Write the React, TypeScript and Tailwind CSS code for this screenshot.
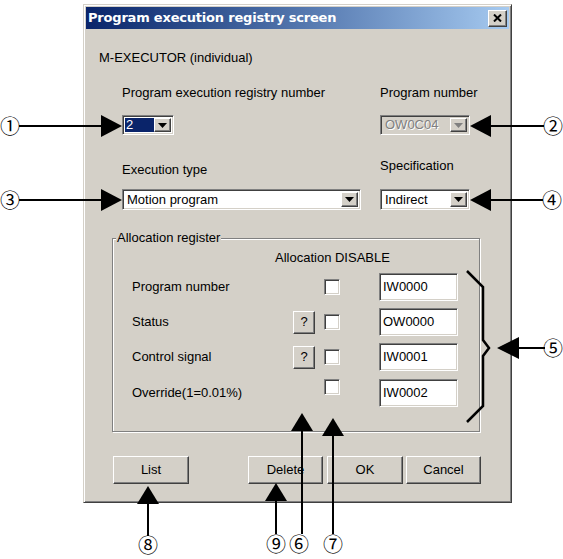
import React from 'react';

const raised =
  'border border-t-white border-l-white border-r-[#404040] border-b-[#404040] shadow-[inset_-1px_-1px_0_#808080,inset_1px_1px_0_#d4d0c8]';
const sunken =
  'border border-t-[#808080] border-l-[#808080] border-r-white border-b-white shadow-[inset_1px_1px_0_#404040,inset_-1px_-1px_0_#d4d0c8]';

const DropButton = ({ disabled }: { disabled?: boolean }) => (
  <div className={`w-[17px] h-full bg-[#d4d0c8] flex items-center justify-center ${raised}`}>
    <svg width="9" height="5" viewBox="0 0 9 5">
      <path d="M0 0h9L4.5 5z" fill={disabled ? '#808080' : '#000'} />
    </svg>
  </div>
);

interface ComboProps {
  className: string;
  children: React.ReactNode;
  disabled?: boolean;
}

const Combo = ({ className, children, disabled }: ComboProps) => (
  <div className={`flex p-[2px] ${sunken} ${disabled ? 'bg-[#d4d0c8]' : 'bg-white'} ${className}`}>
    <div className="flex-1 flex items-center min-w-0">{children}</div>
    <DropButton disabled={disabled} />
  </div>
);

const Button = ({ label, className }: { label: string; className: string }) => (
  <div className={`h-[28px] flex items-center justify-center bg-[#d4d0c8] ${raised} ${className}`}>
    {label}
  </div>
);

const CheckBox = ({ className = '' }: { className?: string }) => (
  <div className={`w-[16px] h-[16px] bg-white ${sunken} ${className}`} />
);

const RegRow = ({ label, help, reg, last }: { label: string; help?: boolean; reg: string; last?: boolean }) => (
  <div className={`flex items-center h-[28px] ${last ? 'mt-[8px]' : 'mt-[7px]'}`}>
    <div className="w-[180px] pl-[19px]">{label}</div>
    {help ? (
      <div className={`w-[22px] h-[23px] flex items-center justify-center bg-[#d4d0c8] ${raised}`}>?</div>
    ) : (
      <div className="w-[22px]" />
    )}
    <CheckBox className={last ? 'ml-[9px] self-start' : 'ml-[9px]'} />
    <div className={`ml-[39px] w-[79px] h-[28px] bg-white flex items-center pl-[3px] ${sunken}`}>{reg}</div>
  </div>
);

// circled callout numbers drawn as text over the figure
const Num = ({ n, className }: { n: string; className: string }) => (
  <span className={`absolute text-[20px] leading-none font-['Noto_Sans_CJK_JP',sans-serif] text-black ${className}`}>
    {n}
  </span>
);

export default function App() {
  return (
    <div className="relative w-[563px] h-[559px] bg-white overflow-hidden font-['Liberation_Sans',Arial,sans-serif] text-[13px] leading-[16px] text-black">
      <div className="ml-[83px] mt-[4px] w-[429px] h-[499px] p-[2px] bg-[#d4d0c8] border border-t-[#d4d0c8] border-l-[#d4d0c8] border-r-[#404040] border-b-[#404040] shadow-[inset_1px_1px_0_white,inset_-1px_-1px_0_#808080]">
        {/* title bar */}
        <div className="h-[22px] flex items-center justify-between px-[2px] bg-gradient-to-r from-[#0a246a] to-[#a6caf0]">
          <span className="text-white font-bold text-[13px] font-['DejaVu_Sans',sans-serif] tracking-[-0.2px]">
            Program execution registry screen
          </span>
          <div className={`w-[19px] h-[17px] bg-[#d4d0c8] flex items-center justify-center ${raised}`}>
            <svg width="9" height="8" viewBox="0 0 9 8">
              <path d="M1 0.5l7 7M8 0.5l-7 7" stroke="#000" strokeWidth="2" />
            </svg>
          </div>
        </div>

        <div className="mt-[21px] ml-[13px]">M-EXECUTOR (individual)</div>

        <div className="mt-[19px] ml-[36px] flex">
          <div className="w-[258px]">Program execution registry number</div>
          <div>Program number</div>
        </div>

        <div className="mt-[14px] ml-[36px] flex">
          <div className="w-[258px]">
            <Combo className="w-[52px] h-[20px]">
              <span className="bg-[#0a246a] text-white w-[29px] h-full flex items-center pl-[1px]">2</span>
            </Combo>
          </div>
          <Combo className="w-[90px] h-[20px]" disabled>
            <span className="pl-[2px] text-[#808080] [text-shadow:1px_1px_0_white]">OW0C04</span>
          </Combo>
        </div>

        <div className="mt-[23px] ml-[36px] flex h-[20px]">
          <div className="w-[258px] pt-[4px]">Execution type</div>
          <div>Specification</div>
        </div>

        <div className="mt-[11px] ml-[36px] flex">
          <div className="w-[258px]">
            <Combo className="w-[239px] h-[21px]">
              <span className="pl-[2px]">Motion program</span>
            </Combo>
          </div>
          <Combo className="w-[90px] h-[21px]">
            <span className="pl-[2px]">Indirect</span>
          </Combo>
        </div>

        {/* Allocation register group */}
        <div className="relative mt-[28px] ml-[26px] w-[368px] h-[194px] border border-[#808080] shadow-[1px_1px_0_white,inset_1px_1px_0_white] pt-[11px]">
          <span className="absolute -top-[9px] left-[3px] px-[1px] bg-[#d4d0c8]">Allocation register</span>
          <div className="ml-[162px]">Allocation DISABLE</div>
          <div className="mt-[6px]">
            <RegRow label="Program number" reg="IW0000" />
            <RegRow label="Status" help reg="OW0000" />
            <RegRow label="Control signal" help reg="IW0001" />
            <RegRow label="Override(1=0.01%)" reg="IW0002" last />
          </div>
        </div>

        <div className="mt-[24px] ml-[27px] flex">
          <Button label="List" className="w-[76px]" />
          <Button label="Delete" className="w-[75px] ml-[59px]" />
          <Button label="OK" className="w-[76px] ml-[4px]" />
          <Button label="Cancel" className="w-[75px] ml-[3px]" />
        </div>
      </div>

      {/* callout arrows */}
      <svg className="absolute inset-0" width="563" height="559" viewBox="0 0 563 559">
        <g stroke="#000" strokeWidth="2" fill="none">
          <path d="M19 126H102" />
          <path d="M490 126H544" />
          <path d="M19 200H102" />
          <path d="M490 200H543" />
          <path d="M518 348H545" />
          <path d="M302 430V534" />
          <path d="M333 435V534" />
          <path d="M148 503V536" />
          <path d="M276 500V534" />
          <path d="M467 271L483 287V340L489 348L483 356V406L467 422" strokeWidth="2.5" />
        </g>
        <g fill="#000">
          <path d="M101 115L122 126L101 137Z" />
          <path d="M491 115L470 126L491 137Z" />
          <path d="M101 189L122 200L101 211Z" />
          <path d="M491 189L470 200L491 211Z" />
          <path d="M519 337L497 348L519 359Z" />
          <path d="M291 431L302 413L313 431Z" />
          <path d="M322 436L333 418L344 436Z" />
          <path d="M137 504L148 486L159 504Z" />
          <path d="M265 501L276 483L287 501Z" />
        </g>
      </svg>
      <Num n="①" className="left-0 top-[116px]" />
      <Num n="②" className="left-[543px] top-[116px]" />
      <Num n="③" className="left-0 top-[190px]" />
      <Num n="④" className="left-[542px] top-[190px]" />
      <Num n="⑤" className="left-[543px] top-[338px]" />
      <Num n="⑨" className="left-[266px] top-[534px]" />
      <Num n="⑥" className="left-[289px] top-[534px]" />
      <Num n="⑦" className="left-[323px] top-[534px]" />
      <Num n="⑧" className="left-[138px] top-[535px]" />
    </div>
  );
}
